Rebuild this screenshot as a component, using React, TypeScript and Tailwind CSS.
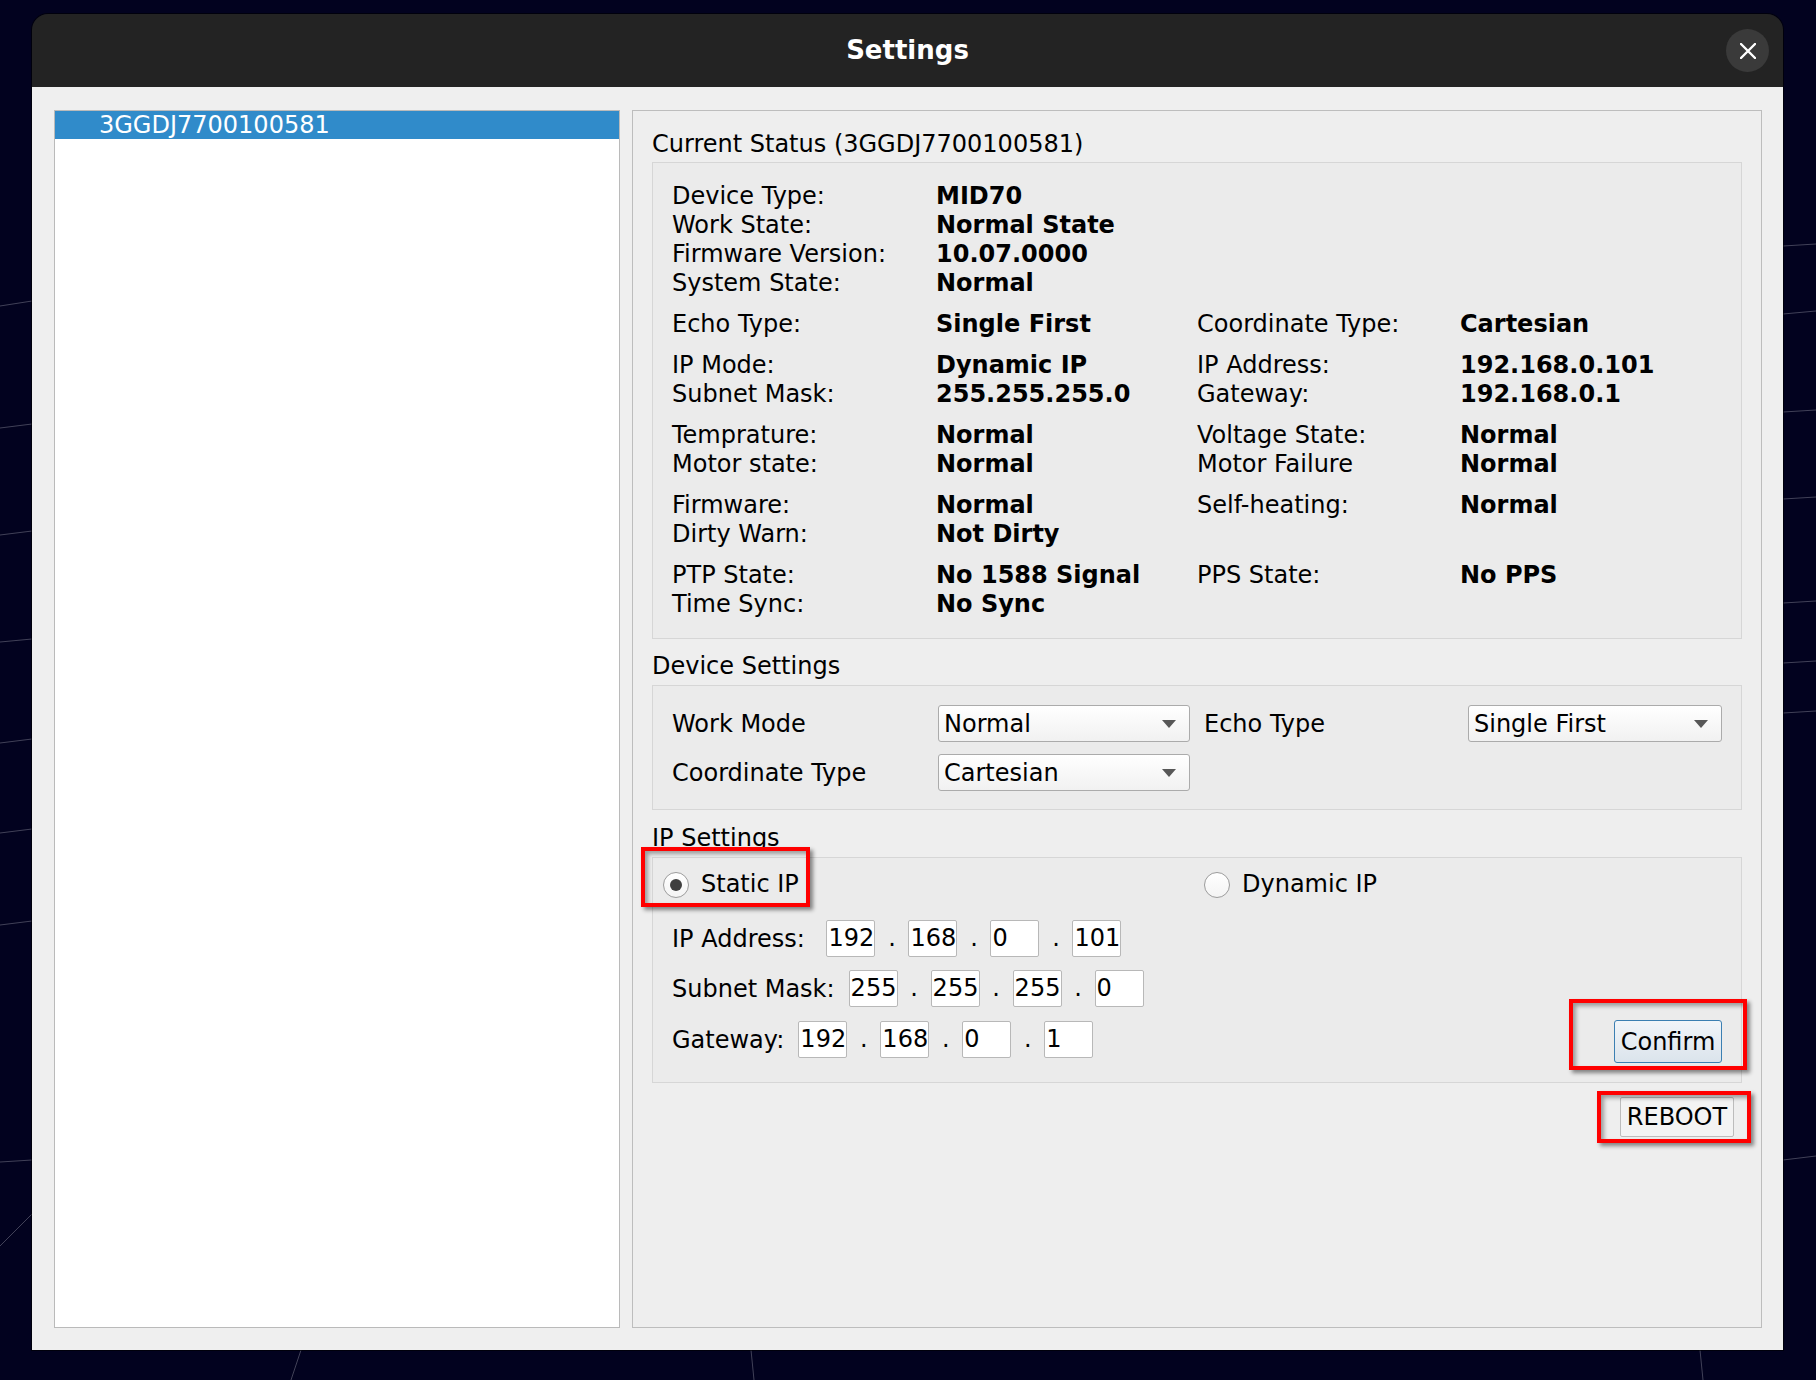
type Row = [string, string, string?, string?];

const STATUS: Row[][] = [
  [
    ["Device Type:", "MID70"],
    ["Work State:", "Normal State"],
    ["Firmware Version:", "10.07.0000"],
    ["System State:", "Normal"],
  ],
  [["Echo Type:", "Single First", "Coordinate Type:", "Cartesian"]],
  [
    ["IP Mode:", "Dynamic IP", "IP Address:", "192.168.0.101"],
    ["Subnet Mask:", "255.255.255.0", "Gateway:", "192.168.0.1"],
  ],
  [
    ["Temprature:", "Normal", "Voltage State:", "Normal"],
    ["Motor state:", "Normal", "Motor Failure", "Normal"],
  ],
  [
    ["Firmware:", "Normal", "Self-heating:", "Normal"],
    ["Dirty Warn:", "Not Dirty"],
  ],
  [
    ["PTP State:", "No 1588 Signal", "PPS State:", "No PPS"],
    ["Time Sync:", "No Sync"],
  ],
];

function Backdrop() {
  const lines = [
    "M0 306 L32 301",
    "M0 428 L32 424",
    "M0 535 L32 531",
    "M0 642 L32 639",
    "M0 743 L32 739",
    "M0 833 L32 829",
    "M0 925 L32 921",
    "M0 1162 L32 1160",
    "M0 1246 L32 1214",
    "M1783 246 L1816 244",
    "M1783 314 L1816 311",
    "M1783 412 L1816 410",
    "M1783 499 L1816 497",
    "M1783 603 L1816 601",
    "M1783 663 L1816 661",
    "M1783 713 L1816 711",
    "M1783 1160 L1816 1156",
    "M301 1350 L291 1380",
    "M751 1350 L754 1380",
    "M1700 1350 L1703 1380",
  ];
  return (
    <svg className="absolute inset-0 h-full w-full" width="1816" height="1380">
      {lines.map((d, i) => (
        <path key={i} d={d} stroke="#5c5c70" strokeWidth="1" opacity="0.7" fill="none" />
      ))}
    </svg>
  );
}

// red annotation frame drawn over a control
function Mark({ className }: { className: string }) {
  return (
    <span
      className={`pointer-events-none absolute border-[4px] border-[#ff0000] shadow-[3px_3px_4px_rgba(0,0,0,0.45),inset_3px_3px_4px_rgba(0,0,0,0.35)] ${className}`}
    />
  );
}

function StatusGroup({ rows }: { rows: Row[] }) {
  return (
    <div className="flex flex-col">
      {rows.map((r, i) => (
        <div key={i} className="grid grid-cols-[264px_261px_263px_1fr] leading-[29px]">
          <span>{r[0]}</span>
          <span className="font-bold">{r[1]}</span>
          <span>{r[2] ?? ""}</span>
          <span className="font-bold">{r[3] ?? ""}</span>
        </div>
      ))}
    </div>
  );
}

function Combo({ value, className }: { value: string; className: string }) {
  return (
    <div
      className={`flex h-[37px] items-center justify-between rounded-[3px] border border-[#ababab] bg-linear-to-b from-white to-[#f1f1f1] pl-[5px] pr-[13px] ${className}`}
    >
      <span className="leading-none">{value}</span>
      <svg width="14" height="8" viewBox="0 0 14 8">
        <path d="M0 0H14L7 8Z" fill="#575757" />
      </svg>
    </div>
  );
}

function IpField({ parts }: { parts: string[] }) {
  return (
    <div className="flex items-center">
      {parts.map((p, i) => (
        <div key={i} className="flex items-center">
          {i > 0 && <span className="w-[33px] text-center leading-[37px]">.</span>}
          <div className="h-[37px] w-[49px] rounded-[2px] border border-[#b8b8b8] bg-white pl-[1px] leading-[35px]">
            {p}
          </div>
        </div>
      ))}
    </div>
  );
}

function Radio({ checked, label }: { checked: boolean; label: string }) {
  return (
    <div className="flex h-[29px] items-center gap-[12px]">
      <span className="flex h-[26px] w-[26px] items-center justify-center rounded-full border border-[#9c9c9c] bg-linear-to-b from-white to-[#f4f4f4]">
        {checked && <span className="h-[12px] w-[12px] rounded-full bg-[#3f3f3f]" />}
      </span>
      <span className="leading-[29px]">{label}</span>
    </div>
  );
}

export default function App() {
  return (
    <div className="relative min-h-screen w-full overflow-hidden bg-[#02021f] pl-[32px] pt-[14px] font-['DejaVu_Sans',sans-serif] text-[24px] text-black">
      <Backdrop />
      <div className="relative flex h-[1336px] w-[1751px] flex-col overflow-hidden rounded-t-[16px] shadow-[0_0_0_1px_rgba(0,0,0,0.6)]">
        <header className="relative flex h-[73px] shrink-0 items-center justify-center bg-[#232323]">
          <h1 className="text-[26px] font-bold text-white">Settings</h1>
          <button className="absolute right-[14px] flex h-[43px] w-[43px] items-center justify-center rounded-full bg-[#3a3a3a]">
            <svg width="16" height="16" viewBox="0 0 16 16">
              <path d="M1 1L15 15M15 1L1 15" stroke="white" strokeWidth="2.4" strokeLinecap="round" />
            </svg>
          </button>
        </header>

        <div className="flex flex-1 gap-[12px] bg-[#efefef] pb-[22px] pl-[22px] pr-[21px] pt-[23px]">
          {/* device list */}
          <div className="w-[566px] shrink-0 border border-[#bababa] bg-white">
            <div className="h-[28px] bg-[#308bca] pl-[44px] leading-[28px] text-white">3GGDJ7700100581</div>
          </div>

          {/* settings panel */}
          <div className="flex w-[1130px] flex-col border border-[#bdbdbd] bg-[#eeeeee] px-[19px] pt-[19px]">
            <div className="leading-[29px]">Current Status (3GGDJ7700100581)</div>
            <div className="mt-[3px] flex flex-col gap-[12px] border border-[#d6d6d6] bg-[#ebebeb] pb-[19px] pl-[19px] pt-[19px]">
              {STATUS.map((g, i) => (
                <StatusGroup key={i} rows={g} />
              ))}
            </div>

            <div className="mt-[13px] leading-[29px]">Device Settings</div>
            <div className="mt-[4px] flex flex-col gap-[12px] border border-[#d6d6d6] bg-[#ebebeb] pb-[18px] pl-[19px] pt-[19px]">
              <div className="flex items-center">
                <span className="w-[266px]">Work Mode</span>
                <Combo value="Normal" className="w-[252px]" />
                <span className="ml-[14px] w-[264px]">Echo Type</span>
                <Combo value="Single First" className="w-[254px]" />
              </div>
              <div className="flex items-center">
                <span className="w-[266px]">Coordinate Type</span>
                <Combo value="Cartesian" className="w-[252px]" />
              </div>
            </div>

            <div className="mt-[14px] leading-[29px]">IP Settings</div>
            <div className="mt-[4px] flex flex-col border border-[#d6d6d6] bg-[#ebebeb] pb-[19px] pt-[12px]">
              <div className="flex pl-[10px]">
                <div className="w-[541px]">
                  <div className="relative flex w-fit">
                    <Radio checked label="Static IP" />
                    <Mark className="-bottom-[8px] -left-[22px] -right-[11px] -top-[23px]" />
                  </div>
                </div>
                <Radio checked={false} label="Dynamic IP" />
              </div>

              <div className="mt-[21px] flex items-center pl-[19px]">
                <span className="mr-[14px]">IP Address:{"\u00a0"}</span>
                <IpField parts={["192", "168", "0", "101"]} />
              </div>
              <div className="mt-[13px] flex items-center pl-[19px]">
                <span className="mr-[14px]">Subnet Mask:</span>
                <IpField parts={["255", "255", "255", "0"]} />
              </div>
              <div className="mt-[14px] flex items-start justify-between pl-[19px] pr-[19px]">
                <div className="flex items-center">
                  <span className="mr-[14px]">Gateway:</span>
                  <IpField parts={["192", "168", "0", "1"]} />
                </div>
                <div className="relative -mt-[1px]">
                  <button className="h-[43px] w-[108px] rounded-[3px] border border-[#3b7fb2] bg-linear-to-b from-[#f1f5f9] to-[#dbe4ec] leading-none">
                    Confirm
                  </button>
                  <Mark className="-bottom-[7px] -left-[45px] -right-[25px] -top-[21px]" />
                </div>
              </div>
            </div>

            <div className="mt-[14px] flex justify-end pr-[8px]">
              <div className="relative">
                <button className="h-[40px] w-[114px] rounded-[2px] border border-[#bcbcbc] bg-[#f3f3f3] leading-none">
                  REBOOT
                </button>
                <Mark className="-bottom-[6px] -left-[23px] -right-[17px] -top-[6px]" />
              </div>
            </div>
          </div>
        </div>
      </div>
    </div>
  );
}
